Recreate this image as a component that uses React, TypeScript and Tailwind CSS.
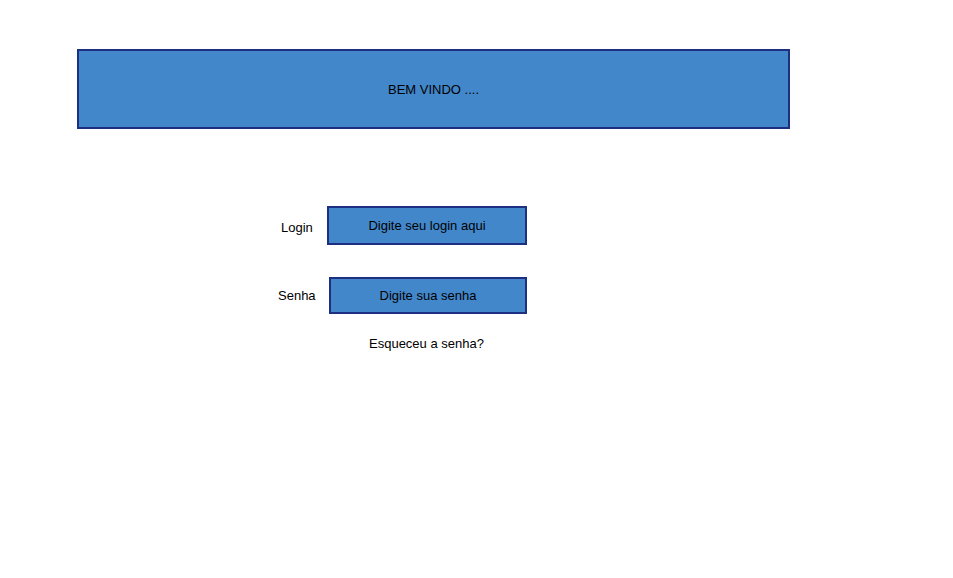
export default function App() {
  return (
    <div className="min-h-screen bg-white font-['Liberation_Sans',Arial,sans-serif] text-[13px] leading-[15px] text-black">
      <div className="pt-[49px] pl-[77px]">
        <div className="flex h-[80px] w-[713px] items-center justify-center border-2 border-[#1c2f80] bg-[#4387cb]">
          BEM VINDO ....
        </div>
      </div>

      <div className="mt-[77px] flex flex-col">
        <div className="flex items-center pl-[281px]">
          <span className="w-[46px] pt-[3px]">Login</span>
          <div className="flex h-[39px] w-[200px] items-center justify-center border-2 border-[#1c2f80] bg-[#4387cb]">
            Digite seu login aqui
          </div>
        </div>

        <div className="mt-[32px] flex items-center pl-[278px]">
          <span className="w-[51px]">Senha</span>
          <div className="flex h-[37px] w-[198px] items-center justify-center border-2 border-[#1c2f80] bg-[#4387cb]">
            Digite sua senha
          </div>
        </div>

        <div className="mt-[22px] pl-[369px]">Esqueceu a senha?</div>
      </div>
    </div>
  );
}
